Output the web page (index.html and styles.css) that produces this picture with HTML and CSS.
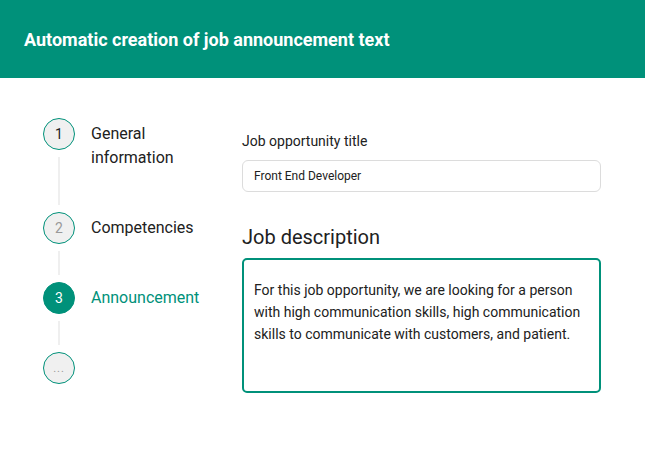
FILE: index.html
```
<html>
  <head>
    <link rel="stylesheet" href="styles.css">
    <title>Job announcement</title>
  </head>
  <body>
    <div class="topbar">
      <h1 class="topbar-title">Automatic creation of job announcement text</h1>
    </div>

    <div class="main">
      <div class="steps">
        <div class="step">
          <div class="step-rail">
            <div class="step-dot done">1</div>
            <div class="step-line"></div>
          </div>
          <div class="step-label">General<br>information</div>
        </div>
        <div class="step">
          <div class="step-rail">
            <div class="step-dot muted">2</div>
            <div class="step-line"></div>
          </div>
          <div class="step-label">Competencies</div>
        </div>
        <div class="step">
          <div class="step-rail">
            <div class="step-dot active">3</div>
            <div class="step-line"></div>
          </div>
          <div class="step-label active">Announcement</div>
        </div>
        <div class="step last">
          <div class="step-rail">
            <div class="step-dot muted more">...</div>
          </div>
          <div class="step-label"></div>
        </div>
      </div>

      <div class="form">
        <label class="field-label">Job opportunity title</label>
        <div class="input-control">Front End Developer</div>

        <h2 class="section-title">Job description</h2>
        <div class="textarea-control">For this job opportunity, we are looking for a person with high communication skills, high communication skills to communicate with customers, and patient.</div>
      </div>
    </div>
  </body>
</html>
```

FILE: styles.css
```
body{
  margin: 0;
  font-family: Roboto, "Liberation Sans", sans-serif;
  color: #212121;
  background: #fff;
}
.topbar{
  height: 78px;
  background: #00917a;
  display: flex;
  align-items: center;
  padding: 0 24px;
}
.topbar-title{
  margin: 0;
  color: #fff;
  font-size: 18px;
  font-weight: 700;
}
.main{
  display: flex;
  padding: 40px 0 0 43px;
}
.steps{
  width: 199px;
}
.step{
  display: flex;
  gap: 16px;
}
.step-rail{
  width: 32px;
  display: flex;
  flex-direction: column;
  align-items: center;
}
.step-dot{
  width: 30px;
  height: 30px;
  border: 1px solid #00917a;
  border-radius: 50%;
  background: #f0f0f0;
  display: flex;
  align-items: center;
  justify-content: center;
  font-size: 14px;
  color: #222;
  flex: none;
}
.step-dot.muted{
  color: #999;
}
.step-dot.more{
  font-size: 11px;
  letter-spacing: 1px;
}
.step-dot.active{
  background: #00917a;
  color: #fff;
}
.step-line{
  flex: 1;
  width: 2px;
  background: #efefef;
  margin: 7px 0;
}
.step-label{
  padding: 4px 0 42px;
  font-size: 16px;
  line-height: 24px;
  color: #212121;
}
.step-label.active{
  color: #00917a;
}
.step.last .step-label{
  padding-bottom: 0;
}
.form{
  width: 359px;
  padding-top: 14px;
}
.field-label{
  display: block;
  font-size: 14px;
  line-height: 18px;
  margin-bottom: 10px;
}
.input-control{
  height: 30px;
  border: 1px solid #dcdcdc;
  border-radius: 6px;
  padding: 0 11px;
  display: flex;
  align-items: center;
  font-size: 12px;
  color: #212121;
}
.section-title{
  margin: 33px 0 9px;
  font-size: 20px;
  font-weight: 400;
  line-height: 24px;
}
.textarea-control{
  height: 100px;
  border: 2px solid #00917a;
  border-radius: 5px;
  padding: 19px 10px 12px;
  font-size: 14px;
  line-height: 22px;
  color: #212121;
}
```
